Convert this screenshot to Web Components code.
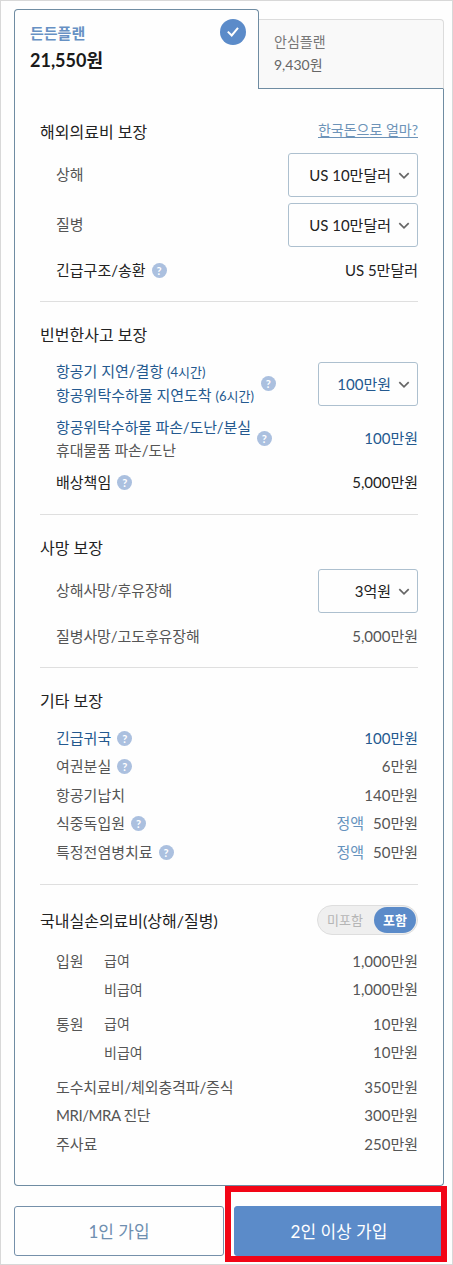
<!DOCTYPE html>
<html lang="ko">
<head>
<meta charset="utf-8">
<title>플랜 선택</title>
<style>
html {
  background: #fefefe;
}
body {
  margin: 0;
  font-family: Lato, "Noto Sans CJK KR", sans-serif;
  font-size: 15px;
  line-height: 23px;
  color: #555;
}
</style>
</head>
<body>
<plan-page></plan-page>

<template id="plan-page">
  <style>
    :host {
      display: block;
      box-sizing: border-box;
      width: 453px;
      height: 1265px;
      padding: 8px 8px 0 13px;
      border: 1px solid #d8d8d8;
      --line: #6f8ca2;
    }
    .tabs {
      display: flex;
      align-items: flex-end;
    }
    .body {
      box-sizing: border-box;
      height: 1097px;
      padding: 0 25px;
      border: 1px solid var(--line);
      border-top: 0;
      border-radius: 0 0 4px 4px;
    }
    .panel {
      width: 430px;
    }
    .actions {
      display: flex;
      gap: 10px;
      margin-top: 20px;
    }
  </style>
  <div class="panel">
    <div class="tabs">
      <plan-tab active><span slot="name">든든플랜</span>21,550원</plan-tab>
      <plan-tab><span slot="name">안심플랜</span>9,430원</plan-tab>
    </div>
    <div class="body">
      <cover-section style="--top: 27px; --bottom: 17px">
        <span slot="title">해외의료비 보장</span>
        <text-link slot="extra">한국돈으로 얼마?</text-link>
        <cover-row tall style="--gap: 6px">상해<select-box slot="value" wide>US 10만달러</select-box></cover-row>
        <cover-row tall style="--gap: 6px">질병<select-box slot="value" wide>US 10만달러</select-box></cover-row>
        <cover-row strong help style="--gap: 9px">긴급구조/송환<span slot="value">US 5만달러</span></cover-row>
      </cover-section>

      <cover-section style="--bottom: 18px">
        <span slot="title">빈번한사고 보장</span>
        <cover-row tall blue help style="--gap: 12px">항공기 지연/결항 <small-note>(4시간)</small-note><br>항공위탁수하물 지연도착 <small-note>(6시간)</small-note><select-box slot="value">100만원</select-box></cover-row>
        <cover-row blue help style="--gap: 10px; --height: 45px; --tracking: -.12px">항공위탁수하물 파손/도난/분실<br><plain-text>휴대물품 파손/도난</plain-text><span slot="value">100만원</span></cover-row>
        <cover-row strong help style="--gap: 7px">배상책임<span slot="value">5,000만원</span></cover-row>
      </cover-section>

      <cover-section style="--bottom: 17px">
        <span slot="title">사망 보장</span>
        <cover-row tall style="--gap: 6px; --tracking: -.1px">상해사망/후유장해<select-box slot="value">3억원</select-box></cover-row>
        <cover-row style="--gap: 9px; --tracking: -.1px">질병사망/고도후유장해<span slot="value">5,000만원</span></cover-row>
      </cover-section>

      <cover-section style="--bottom: 17.5px">
        <span slot="title">기타 보장</span>
        <cover-row compact blue help style="--gap: 8px">긴급귀국<span slot="value">100만원</span></cover-row>
        <cover-row compact help>여권분실<span slot="value">6만원</span></cover-row>
        <cover-row compact>항공기납치<span slot="value">140만원</span></cover-row>
        <cover-row compact help>식중독입원<fixed-tag slot="value">정액</fixed-tag><span slot="value">50만원</span></cover-row>
        <cover-row compact help>특정전염병치료<fixed-tag slot="value">정액</fixed-tag><span slot="value">50만원</span></cover-row>
      </cover-section>

      <cover-section last style="--top: 20px">
        <span slot="title">국내실손의료비(상해/질병)</span>
        <include-toggle slot="extra"></include-toggle>
        <cover-row compact grouped style="--gap: 11px"><span slot="group">입원</span>급여<span slot="value">1,000만원</span></cover-row>
        <cover-row compact grouped>비급여<span slot="value">1,000만원</span></cover-row>
        <cover-row compact grouped style="--gap: 6px"><span slot="group">통원</span>급여<span slot="value">10만원</span></cover-row>
        <cover-row compact grouped>비급여<span slot="value">10만원</span></cover-row>
        <cover-row compact style="--gap: 6px; --tracking: -.12px">도수치료비/체외충격파/증식<span slot="value">350만원</span></cover-row>
        <cover-row compact style="--tracking: -.45px">MRI/MRA 진단<span slot="value">300만원</span></cover-row>
        <cover-row compact>주사료<span slot="value">250만원</span></cover-row>
      </cover-section>
    </div>
  </div>
  <div class="actions">
    <join-button>1인 가입</join-button>
    <join-button primary>2인 이상 가입</join-button>
  </div>
</template>

<template id="plan-tab">
  <style>
    :host {
      display: flex;
      justify-content: space-between;
      box-sizing: border-box;
      width: 185px;
      height: 70px;
      padding: 10px 15px;
      border: 1px solid #dcdcdc;
      border-left: 0;
      border-bottom-color: var(--line);
      border-radius: 0 4px 0 0;
      background: #f9f9f9;
      font-size: 14px;
      line-height: 23px;
      color: #666;
    }
    .name {
      color: #777;
    }
    svg {
      display: none;
    }
    :host([active]) {
      width: 245px;
      height: 80px;
      padding: 10px 12px 0 15px;
      border: 1px solid var(--line);
      border-bottom: 0;
      border-radius: 4px 4px 0 0;
      background: #fefefe;
      font-size: 18px;
      font-weight: 700;
      line-height: 28px;
      color: #1a1a1a;
    }
    :host([active]) .name {
      font-size: 15px;
      line-height: 26px;
      color: #6791c4;
    }
    :host([active]) svg {
      display: block;
      margin-top: -1px;
    }
  </style>
  <div>
    <div class="name"><slot name="name"></slot></div>
    <slot></slot>
  </div>
  <svg width="26" height="26" viewBox="0 0 26 26">
    <circle cx="13" cy="13" r="13" fill="#5b8bc9"/>
    <path d="M7.800 12.600l3.900 3.900 6.300-7.700" fill="none" stroke="#fff" stroke-width="2"/>
  </svg>
</template>

<template id="cover-section">
  <style>
    :host {
      display: block;
      padding: var(--top, 17px) 0 var(--bottom, 0);
      border-bottom: 1px solid #dfdfdf;
    }
    :host([last]) {
      border: 0;
    }
    header {
      display: flex;
      align-items: center;
      justify-content: space-between;
      height: 30px;
      font-size: 16px;
      color: #222;
    }
    .rows {
      padding: 1px 0 0 16px;
    }
  </style>
  <header><slot name="title"></slot><slot name="extra"></slot></header>
  <div class="rows"><slot></slot></div>
</template>

<template id="cover-row">
  <style>
    :host {
      display: flex;
      align-items: center;
      height: var(--height, 28px);
      margin-top: var(--gap, 0);
      white-space: nowrap;
    }
    :host([tall]) {
      height: 44px;
    }
    :host([compact]) {
      height: 28.5px;
    }
    :host([strong]) {
      color: #222;
    }
    :host([blue]) {
      color: #24598f;
    }
    .group,
    help-icon {
      display: none;
    }
    .label {
      letter-spacing: var(--tracking, normal);
    }
    :host([tall]:not([blue])) .label {
      margin-bottom: 2px;
    }
    :host([grouped]) .group {
      display: block;
      width: 48px;
    }
    :host([grouped]) .label {
      margin-bottom: 1px;
      font-size: 14px;
    }
    :host([help]) help-icon {
      display: block;
      margin-left: 6px;
    }
    :host([help][tall]) help-icon {
      margin: 0 0 1px 7px;
    }
    .value {
      display: flex;
      gap: 9px;
      margin-left: auto;
    }
  </style>
  <div class="group"><slot name="group"></slot></div>
  <div class="label"><slot></slot></div>
  <help-icon></help-icon>
  <div class="value"><slot name="value"></slot></div>
</template>

<template id="help-icon">
  <style>
    :host {
      width: 15px;
      height: 15px;
      border-radius: 50%;
      background: #abc0df;
      color: #fff;
      font-size: 11px;
      font-weight: 700;
      line-height: 15px;
      text-align: center;
    }
  </style>
  ?
</template>

<template id="select-box">
  <style>
    :host {
      display: flex;
      align-items: center;
      justify-content: flex-end;
      gap: 8px;
      box-sizing: border-box;
      width: 100px;
      height: 44px;
      padding-right: 8px;
      border: 1px solid #adc0cf;
      border-radius: 3px;
      color: #222;
    }
    :host([wide]) {
      width: 130px;
    }
    :host-context(cover-row[blue]) {
      color: #24598f;
    }
  </style>
  <span><slot></slot></span>
  <svg width="10" height="8" viewBox="0 0 10 8" overflow="visible">
    <path d="M.3 2.200L5 6.900l4.700-4.700" fill="none" stroke="#666" stroke-width="1.700"/>
  </svg>
</template>

<template id="include-toggle">
  <style>
    :host {
      display: flex;
      align-items: center;
      justify-content: space-between;
      box-sizing: border-box;
      width: 101px;
      height: 30px;
      padding: 0 1px 0 9px;
      border: 1px solid #dedede;
      border-radius: 15px;
      background: #efefef;
      font-size: 13px;
      color: #b5b5b5;
    }
    b {
      width: 42px;
      height: 26px;
      border-radius: 13px;
      background: #5b8bc9;
      color: #fff;
      line-height: 26px;
      text-align: center;
    }
  </style>
  <span>미포함</span><b>포함</b>
</template>

<template id="join-button">
  <style>
    :host {
      display: flex;
      align-items: center;
      justify-content: center;
      position: relative;
      box-sizing: border-box;
      width: 210px;
      height: 50px;
      border: 1px solid #7590aa;
      border-radius: 3px;
      font-size: 17px;
      color: #6f8fb0;
    }
    :host([primary]) {
      border-color: #5b8bc9;
      background: #5b8bc9;
      color: #fff;
    }
    /* red frame marking the button to press */
    :host([primary])::after {
      content: "";
      position: absolute;
      inset: -21px -4px -7px -10px;
      border: 6px solid #f20516;
    }
  </style>
  <slot></slot>
</template>

<template id="text-link">
  <style>
    :host {
      margin-bottom: 4px;
      font-size: 14px;
      color: #6d93b8;
      text-decoration: underline;
      text-underline-offset: 2px;
    }
  </style>
  <slot></slot>
</template>

<template id="small-note">
  <style>
    :host {
      font-size: 13px;
    }
  </style>
  <slot></slot>
</template>

<template id="plain-text">
  <style>
    :host {
      color: #555;
    }
  </style>
  <slot></slot>
</template>

<template id="fixed-tag">
  <style>
    :host {
      color: #6592bd;
    }
  </style>
  <slot></slot>
</template>

<script>
// every element is only markup and styles, taken from the template of the same name
document.querySelectorAll("template").forEach((template) => {
  customElements.define(
    template.id,
    class extends HTMLElement {
      constructor() {
        super();
        this.attachShadow({ mode: "open" });
        this.shadowRoot.appendChild(template.content.cloneNode(true));
      }
    }
  );
});
</script>
</body>
</html>
